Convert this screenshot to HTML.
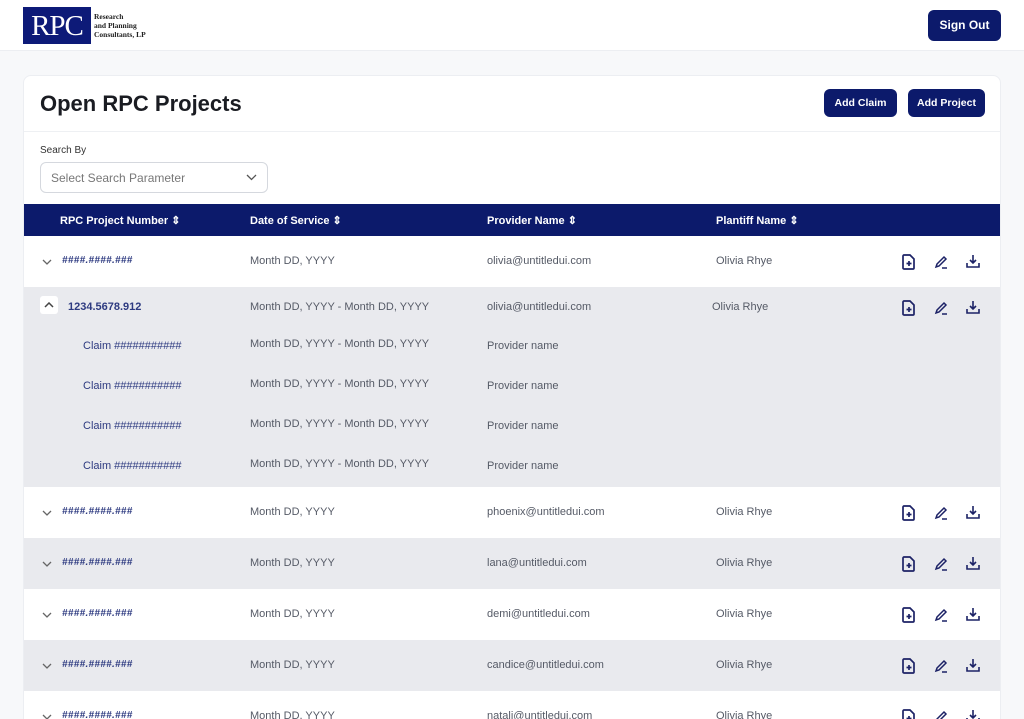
<!DOCTYPE html><html><head><style>
*{box-sizing:border-box;margin:0;padding:0}
html,body{width:1024px;height:719px;overflow:hidden}
body{background:#f7f8fa;font-family:"Liberation Sans",sans-serif;position:relative}
.hdr{position:absolute;left:0;top:0;width:1024px;height:51px;background:#fff;border-bottom:1px solid #eceef2}
.logo{position:absolute;left:23px;top:7px;width:68px;height:37px;background:#0d1a78;color:#fff;font-family:"Liberation Serif",serif;font-size:29px;line-height:38px;text-align:center;letter-spacing:-1px}
.lt{position:absolute;left:94px;top:12px;font-family:"Liberation Serif",serif;font-weight:bold;font-size:7.5px;line-height:9px;color:#222}
.btn{position:absolute;background:#0c1a6b;color:#fff;font-weight:bold;border-radius:6px;text-align:center}
.card{position:absolute;left:23px;top:75px;width:978px;height:660px;background:#fff;border:1px solid #eceef2;border-radius:8px;overflow:hidden}
.t{position:absolute;white-space:nowrap}
.th{position:absolute;left:0;top:128px;width:978px;height:32px;background:#0c1a6b;color:#fff;font-size:11px;font-weight:bold}
.row{position:absolute;left:0;width:978px;font-size:11px;color:#555a66}
.num{color:#2d3a80;font-size:10px;font-weight:bold;font-style:italic;letter-spacing:.3px}
.ic{position:absolute}
</style></head><body>
<div class="hdr"><div class="logo">RPC</div><div class="lt">Research<br>and Planning<br>Consultants, LP</div>
<div class="btn" style="left:928px;top:10px;width:73px;height:31px;line-height:31px;font-size:12px">Sign Out</div></div>
<div class="card">
<div class="t" style="left:16px;top:15px;font-size:22px;font-weight:bold;color:#1a1c22">Open RPC Projects</div>
<div class="btn" style="left:800px;top:13px;width:73px;height:28px;line-height:28px;font-size:10.5px">Add Claim</div>
<div class="btn" style="left:884px;top:13px;width:77px;height:28px;line-height:28px;font-size:10.5px">Add Project</div>
<div style="position:absolute;left:0;top:55px;width:978px;border-top:1px solid #eef0f3"></div>
<div class="t" style="left:16px;top:69px;font-size:10px;color:#333">Search By</div>
<div style="position:absolute;left:16px;top:86px;width:228px;height:31px;border:1px solid #d5d8de;border-radius:6px;font-size:12px;color:#777;padding:8px 10px">Select Search Parameter<svg style="position:absolute;right:10px;top:11px" width="11" height="7" viewBox="0 0 11 7" fill="none" stroke="#555" stroke-width="1.3"><path d="M1 1l4.5 4.5L10 1"/></svg></div>
<div class="th"><span class="t" style="left:36px;top:10px">RPC Project Number ⇕</span><span class="t" style="left:226px;top:10px">Date of Service ⇕</span><span class="t" style="left:463px;top:10px">Provider Name ⇕</span><span class="t" style="left:692px;top:10px">Plantiff Name ⇕</span></div>
<div id="rows"></div>
</div>
<script>
const icons=`<svg class="ic" style="left:878px;top:18px" width="14" height="16" viewBox="0 0 14 16" fill="none" stroke="#1c2266" stroke-width="1.7"><path d="M2 1h6l4 4v9a1 1 0 0 1-1 1H2a1 1 0 0 1-1-1V2a1 1 0 0 1 1-1z"/><path d="M7 7v5M4.5 9.5h5"/></svg><svg class="ic" style="left:910px;top:19px" width="14" height="14" viewBox="0 0 14 14" fill="none" stroke="#1c2266" stroke-width="1.5"><path d="M2 12l1-3 7-7 2 2-7 7zM8 13h5"/></svg><svg class="ic" style="left:942px;top:18px" width="14" height="15" viewBox="0 0 14 15" fill="none" stroke="#1c2266" stroke-width="1.6"><path d="M7 1v8M4 6l3 3 3-3M1 9v4h12V9"/></svg>`;
let h='';
function row(top,bg,open,num,date,prov,pl){h+=`<div class="row" style="top:${top}px;height:51px;background:${bg}">
${open?'<span class="t" style="left:16px;top:14px;width:18px;height:18px;background:#fff;border-radius:3px"><svg style="position:absolute;left:4px;top:6px" width="10" height="6" viewBox="0 0 10 6" fill="none" stroke="#444" stroke-width="1.5"><path d="M1 5l4-4 4 4"/></svg></span>':'<svg class="ic" style="left:18px;top:23px" width="10" height="6" viewBox="0 0 10 6" fill="none" stroke="#666" stroke-width="1.3"><path d="M1 1l4 4 4-4"/></svg>'}
<span class="t ${open?'':'num'}" style="left:${open?44:38}px;top:19px;${open?'color:#2d3a80;font-weight:bold':''}">${num}</span>
<span class="t" style="left:226px;top:19px">${date}</span><span class="t" style="left:463px;top:19px">${prov}</span><span class="t" style="left:${open?688:692}px;top:19px">${pl}</span>${icons}</div>`}
row(160,'#fff',0,'####.####.###','Month DD, YYYY','olivia@untitledui.com','Olivia Rhye');
h+=`<div class="row" style="top:211px;height:200px;background:#e9eaee"></div>`;
row(206,'transparent',1,'1234.5678.912','Month DD, YYYY - Month DD, YYYY','olivia@untitledui.com','Olivia Rhye');
for(let i=0;i<4;i++)h+=`<div class="row" style="top:${264+i*40}px;height:20px"><span class="t" style="left:59px;color:#2d3a80">Claim ###########</span><span class="t" style="left:226px;top:-2px">Month DD, YYYY - Month DD, YYYY</span><span class="t" style="left:463px">Provider name</span></div>`;
const d=[['#fff','phoenix'],['#e9eaee','lana'],['#fff','demi'],['#e9eaee','candice'],['#fff','natali']];
d.forEach((x,i)=>row(411+i*51,x[0],0,'####.####.###','Month DD, YYYY',x[1]+'@untitledui.com','Olivia Rhye'));
document.getElementById('rows').innerHTML=h;
</script>
</body></html>
